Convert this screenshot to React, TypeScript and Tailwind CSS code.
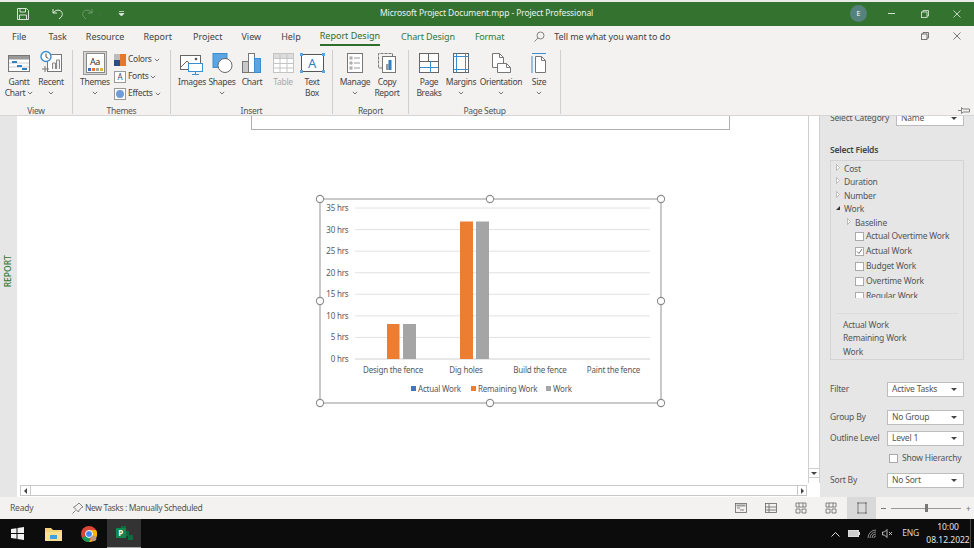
const font = { fontFamily: '"Noto Sans", "Open Sans", sans-serif' };

function Caret({ className = "" }: { className?: string }) {
  return (
    <svg width="6" height="4" viewBox="0 0 6 4" className={className}>
      <path d="M0.8 0.8 L3 3 L5.2 0.8" fill="none" stroke="#666" strokeWidth="0.9" />
    </svg>
  );
}

function SelectBox({ label, className = "" }: { label: string; className?: string }) {
  return (
    <div className={`flex items-center justify-between h-[15px] bg-white border border-[#bdbdbd] pl-1 pr-[6px] text-[#555] ${className}`}>
      <span>{label}</span>
      <span className="w-0 h-0 border-x-[3px] border-x-transparent border-t-[3px] border-t-[#444]" />
    </div>
  );
}

function RibbonButton({ w, icon, lines, caret, disabled }: { w: string; icon: React.ReactNode; lines: string[]; caret?: boolean; disabled?: boolean }) {
  return (
    <div className={`${w} flex flex-col items-center leading-[11px] ${disabled ? "text-[#a8a8a8]" : "text-[#444]"}`}>
      <div className="h-[26px] flex items-start justify-center">{icon}</div>
      {lines.map((l, i) => (
        <div key={i} className="whitespace-nowrap flex items-center gap-[2px] h-[11px]">
          {l}
          {caret && lines.length === 2 && i === 1 && <Caret />}
        </div>
      ))}
      {caret && lines.length === 1 && <Caret className="mt-[4px]" />}
    </div>
  );
}

function Group({ w, ml, label, children }: { w: string; ml: string; label: string; children: React.ReactNode }) {
  return (
    <div className={`${w} h-[64px] flex flex-col border-r border-[#cfcfcf]`}>
      <div className={`flex-1 flex ${ml}`}>{children}</div>
      <div className="text-center text-[#555] leading-[11px] -mb-[2px]">{label}</div>
    </div>
  );
}

const Ico = ({ children, w = 28, h = 28 }: { children: React.ReactNode; w?: number; h?: number }) => (
  <svg width={w} height={h} viewBox={`0 0 ${w} ${h}`} fill="none">{children}</svg>
);

const GanttIcon = (
  <Ico w={24}>
    <rect x="1.5" y="5.5" width="21" height="16" fill="#fff" stroke="#777" />
    <rect x="2" y="6" width="20" height="3.5" fill="#999" />
    <path d="M2 13h20M2 17h20" stroke="#ccc" />
    <rect x="5" y="11" width="5" height="2" fill="#2f7fc4" />
    <rect x="10" y="15" width="5" height="2" fill="#2f7fc4" />
    <rect x="15" y="18" width="5" height="2" fill="#2f7fc4" />
  </Ico>
);
const RecentIcon = (
  <Ico w={24}>
    <rect x="8.5" y="4.5" width="14" height="17" fill="#fff" stroke="#777" />
    <path d="M13.5 19v-6h3v6M17.5 19v-9h3v9" stroke="#888" fill="#eee" />
    <path d="M3 19h7M6 16v6" stroke="#777" />
    <circle cx="7" cy="6.5" r="5" fill="#fff" stroke="#3b8ed0" strokeWidth="1.4" />
    <path d="M7 3.5V7l2.4 1.4" stroke="#555" />
  </Ico>
);
const ThemesIcon = (
  <div className="w-[24px] h-[24px] mt-px bg-[#d6d6d6] border border-[#9a9a9a] flex items-center justify-center">
    <div className="w-[19px] h-[20px] bg-white border border-[#888] flex flex-col items-center text-[9px] leading-[13px] text-[#333] pt-[1px]">
      Aa
      <svg width="15" height="3" viewBox="0 0 15 3">
        <rect width="3" height="3" fill="#3f6fb5" /><rect x="4" width="3" height="3" fill="#e5762c" /><rect x="8" width="3" height="3" fill="#a5a5a5" /><rect x="12" width="3" height="3" fill="#e3b62a" />
      </svg>
    </div>
  </div>
);
const ImagesIcon = (
  <Ico w={26}>
    <rect x="1.5" y="5.5" width="20" height="14" fill="#fff" stroke="#666" />
    <path d="M2 17l6-6 5 5" stroke="#666" />
    <circle cx="17" cy="9" r="1.3" fill="#555" />
    <rect x="9.5" y="13.5" width="14" height="8" fill="#fff" stroke="#3b8ed0" />
    <path d="M16.500 22v2M13 24.500h7" stroke="#3b8ed0" />
  </Ico>
);
const ShapesIcon = (
  <Ico w={24}>
    <rect x="3" y="3.500" width="14" height="14" fill="#5da4e2" stroke="#3b8ed0" />
    <circle cx="15" cy="15.500" r="7" fill="#fff" stroke="#666" />
  </Ico>
);
const ChartIcon = (
  <Ico w={24}>
    <rect x="2.500" y="11.500" width="6" height="11" fill="#c8c8c8" stroke="#777" />
    <rect x="8.500" y="3.500" width="6" height="19" fill="#fff" stroke="#777" />
    <rect x="14.500" y="8.500" width="6" height="14" fill="#5da4e2" stroke="#3b8ed0" />
  </Ico>
);
const TableIcon = (
  <Ico w={24}>
    <rect x="2.500" y="3.500" width="20" height="19" fill="#fff" stroke="#c4c4c4" />
    <rect x="3" y="4" width="19" height="4" fill="#dcdcdc" />
    <path d="M2.500 8.500h20M2.500 13.500h20M2.500 18h20M9 4v18M16 4v18" stroke="#c4c4c4" />
  </Ico>
);
const TextBoxIcon = (
  <div className="relative w-[23px] h-[18px] mt-[4px] bg-white border border-[#555] flex items-center justify-center text-[13px] text-[#2f7fc4] leading-none">
    A
    <span className="absolute -left-[2px] -top-[2px] w-[3px] h-[3px] bg-[#5da4e2]" />
    <span className="absolute -right-[2px] -top-[2px] w-[3px] h-[3px] bg-[#5da4e2]" />
    <span className="absolute -left-[2px] -bottom-[2px] w-[3px] h-[3px] bg-[#5da4e2]" />
    <span className="absolute -right-[2px] -bottom-[2px] w-[3px] h-[3px] bg-[#5da4e2]" />
  </div>
);
const ManageIcon = (
  <Ico w={18}>
    <rect x="1.500" y="3.500" width="15" height="19" fill="#fff" stroke="#777" />
    <path d="M8 8h6M8 13h6M8 18h6" stroke="#999" />
    <rect x="4" y="7" width="2" height="2" stroke="#777" strokeWidth="0.7" />
    <rect x="4" y="12" width="2" height="2" stroke="#777" strokeWidth="0.7" />
    <rect x="4" y="17" width="2" height="2" stroke="#777" strokeWidth="0.7" />
  </Ico>
);
const CopyIcon = (
  <Ico w={22}>
    <path d="M6 18H2.500V3.500h14V7" stroke="#777" strokeDasharray="3 1" />
    <rect x="6.500" y="6.500" width="13" height="16" fill="#fff" stroke="#777" />
    <rect x="10" y="14" width="2.500" height="6" fill="#999" />
    <rect x="12.500" y="10" width="3" height="10" fill="#2f7fc4" />
  </Ico>
);
const BreaksIcon = (
  <Ico w={22}>
    <rect x="1.500" y="3.500" width="19" height="19" fill="#fff" stroke="#666" />
    <path d="M1.500 11.500h19M10.500 3.500v8" stroke="#666" />
    <path d="M1.500 17.500h19M12.500 11.500v11" stroke="#3b8ed0" />
  </Ico>
);
const MarginsIcon = (
  <Ico w={18}>
    <rect x="1.500" y="3.500" width="15" height="19" fill="#fff" stroke="#666" />
    <path d="M1.500 6.500h15M1.500 19.500h15M4.500 3.500v19M13.500 3.500v19" stroke="#3b8ed0" />
  </Ico>
);
const OrientationIcon = (
  <Ico w={22}>
    <path d="M2.500 3.500h7l4 4v10h-11z" fill="#fff" stroke="#777" />
    <path d="M9.500 3.500v4h4" stroke="#777" />
    <path d="M7.500 13.500h9l4 4v5h-13z" fill="#fff" stroke="#777" />
    <path d="M16.500 13.500v4h4" stroke="#777" />
  </Ico>
);
const SizeIcon = (
  <Ico w={18}>
    <path d="M2 3.500h14M2 6v17" stroke="#3b8ed0" />
    <path d="M5.500 6.500h6l4 4v12h-10z" fill="#fff" stroke="#777" />
    <path d="M11.500 6.500v4h4" stroke="#777" />
  </Ico>
);

function ThemeRow({ label, icon }: { label: string; icon: React.ReactNode }) {
  return (
    <div className="h-[17px] flex items-center gap-[2px] text-[#444]">
      {icon}
      <span>{label}</span>
      <Caret />
    </div>
  );
}

function Tree({ label, pl, open }: { label: string; pl: string; open?: boolean }) {
  return (
    <div className={`h-[13.5px] flex items-center ${pl} gap-[3px] text-[#555]`}>
      {open ? (
        <span className="w-0 h-0 border-l-[4px] border-l-transparent border-b-[4px] border-b-[#333] -mt-[2px] mr-[1px]" />
      ) : (
        <svg width="4" height="7" viewBox="0 0 4 7" className="-mt-[3px] mr-[1px]"><path d="M.5.5L3.500 3.500L.5 6.500z" fill="#fff" stroke="#999" strokeWidth="0.6" /></svg>
      )}
      <span>{label}</span>
    </div>
  );
}

function FieldCheck({ label, checked }: { label: string; checked?: boolean }) {
  return (
    <div className="h-[15px] flex items-center pl-[24px] gap-[2px] text-[#555]">
      <span className="w-[9px] h-[9px] bg-white border border-[#aaa] flex items-center justify-center">
        {checked && <svg width="7" height="7" viewBox="0 0 7 7"><path d="M1 3.500L3 5.500L6 1" fill="none" stroke="#555" strokeWidth="0.8" /></svg>}
      </span>
      <span>{label}</span>
    </div>
  );
}

function LabeledSelect({ label, value, mt }: { label: string; value: string; mt: string }) {
  return (
    <div className={`flex items-center justify-between ${mt}`}>
      <span className="text-[#555]">{label}</span>
      <SelectBox label={value} className="w-[77px]" />
    </div>
  );
}

function Chart() {
  const ys = [35, 30, 25, 20, 15, 10, 5, 0];
  const y0 = 160;
  const step = 21.57;
  const handles = [[6, 6], [176, 6], [347, 6], [6, 108], [347, 108], [6, 210], [176, 210], [347, 210]];
  return (
    <svg width="354" height="216" viewBox="0 0 354 216" fontFamily='"Noto Sans", sans-serif' fontSize="8" letterSpacing="-0.2" fill="#595959">
      <rect x="6" y="6" width="341" height="204" fill="#fff" stroke="#a6a6a6" strokeWidth="1.2" />
      {ys.map((v) => {
        const y = y0 + 6 - (v / 5) * step;
        return (
          <g key={v}>
            <line x1="41" x2="336" y1={y} y2={y} stroke={v === 0 ? "#d0d0d0" : "#e2e2e2"} />
            <text x="34.500" y={y + 3} textAnchor="end">{v} hrs</text>
          </g>
        );
      })}
      <rect x="73" y="131" width="12.500" height="35" fill="#ed7d31" />
      <rect x="89" y="131" width="13" height="35" fill="#a5a5a5" />
      <rect x="146" y="28.500" width="13" height="137.500" fill="#ed7d31" />
      <rect x="162" y="28.500" width="13" height="137.500" fill="#a5a5a5" />
      <text x="79" y="179.500" textAnchor="middle">Design the fence</text>
      <text x="152" y="179.500" textAnchor="middle">Dig holes</text>
      <text x="226" y="179.500" textAnchor="middle">Build the fence</text>
      <text x="299.500" y="179.500" textAnchor="middle">Paint the fence</text>
      <rect x="97" y="193" width="5" height="5" fill="#4472c4" />
      <text x="104" y="198.500">Actual Work</text>
      <rect x="157" y="193" width="5" height="5" fill="#ed7d31" />
      <text x="164" y="198.500">Remaining Work</text>
      <rect x="232" y="193" width="5" height="5" fill="#a5a5a5" />
      <text x="239" y="198.500">Work</text>
      {handles.map(([x, y], i) => (
        <circle key={i} cx={x} cy={y} r="3.600" fill="#fff" stroke="#8c8c8c" strokeWidth="1.100" />
      ))}
    </svg>
  );
}

const ViewIcon = ({ children }: { children: React.ReactNode }) => (
  <svg width="12" height="12" viewBox="0 0 12 12" fill="none" stroke="#666" strokeWidth="0.8">{children}</svg>
);

export default function App() {
  return (
    <div className="w-[974px] h-[548px] flex flex-col overflow-hidden bg-white text-[8.5px] leading-none" style={font}>
      {/* title bar */}
      <div className="h-[26px] border-t-2 border-[#e9ece8] bg-[#33722f] flex items-center text-white shrink-0 pb-px">
        <div className="w-[380px] flex items-center shrink-0 pl-[17px]">
          <svg width="12" height="12" viewBox="0 0 12 12" fill="none" stroke="#e8efe6" strokeWidth="0.9">
            <path d="M.5.5h9l2 2v9H.5z" /><path d="M3 .5v3.500h5.500V.5M2.500 11.500V7h7v4.500" />
          </svg>
          <svg width="12" height="12" viewBox="0 0 12 12" fill="none" stroke="#e8efe6" strokeWidth="1" className="ml-[23px]">
            <path d="M1 1v4h4M1.200 5C3 2.500 5.500 1.500 8 2.500c2.500 1.200 3 4.500 1.200 6.500L7 11" />
          </svg>
          <svg width="12" height="12" viewBox="0 0 12 12" fill="none" stroke="#6f9c6c" strokeWidth="1" className="ml-[17px]">
            <path d="M11 1v4H7M10.800 5C9 2.500 6.500 1.500 4 2.500 1.500 3.700 1 7 2.800 9L5 11" />
          </svg>
          <Caret className="ml-[4px] opacity-50" />
          <svg width="7" height="6" viewBox="0 0 7 6" className="ml-[15px]"><path d="M1 .5h5M1 2.500h5L3.500 5z" stroke="#e8efe6" strokeWidth="0.7" fill="#e8efe6" /></svg>
        </div>
        <div className="w-[213px] text-center whitespace-nowrap text-[#eef3ed] tracking-[-0.1px]">Microsoft Project Document.mpp  -  Project Professional</div>
        <div className="flex-1 flex items-center justify-end pr-[13px]">
          <div className="w-[17px] h-[17px] rounded-full bg-[#55827c] flex items-center justify-center text-[7px]">E</div>
          <span className="w-[7px] h-px bg-[#cfe0cd] ml-[21px]" />
          <svg width="8" height="8" viewBox="0 0 8 8" fill="none" stroke="#e8efe6" strokeWidth="0.8" className="ml-[26px]"><rect x=".5" y="2" width="5.500" height="5.500" /><path d="M2 2V.5h5.500V6H6" /></svg>
          <svg width="8" height="8" viewBox="0 0 8 8" stroke="#e8efe6" strokeWidth="0.8" className="ml-[24px]"><path d="M.5.5l7 7M7.500.5l-7 7" /></svg>
        </div>
      </div>

      {/* tabs */}
      <div className="h-[20px] bg-[#f3f2f1] flex items-center text-[9px] text-[#444] shrink-0 relative">
        <div className="flex items-center pl-[12px]">
          <span>File</span>
          <span className="ml-[22px]">Task</span>
          <span className="ml-[19px] tracking-[-0.05px]">Resource</span>
          <span className="ml-[19px]">Report</span>
          <span className="ml-[21px]">Project</span>
          <span className="ml-[19px]">View</span>
          <span className="ml-[20px]">Help</span>
          <span className="ml-[19px] h-[20px] flex items-center text-[#2f6f2c] border-b-2 border-[#2f6f2c]">Report Design</span>
          <span className="ml-[21px] tracking-[-0.1px] text-[#2f7a3a]">Chart Design</span>
          <span className="ml-[20px] tracking-[-0.2px] text-[#2f7a3a]">Format</span>
        </div>
        <svg width="11" height="11" viewBox="0 0 11 11" fill="none" stroke="#666" strokeWidth="0.8" className="ml-[30px]"><circle cx="6.500" cy="4.500" r="3.500" /><path d="M4 7l-3.500 3.500" /></svg>
        <span className="ml-[9px] tracking-[-0.1px]">Tell me what you want to do</span>
        <div className="flex-1 flex items-center justify-end pr-[13px]">
          <svg width="8" height="8" viewBox="0 0 8 8" fill="none" stroke="#555" strokeWidth="0.8"><rect x=".5" y="2" width="5.500" height="5.500" /><path d="M2 2V.5h5.500V6H6" /></svg>
          <svg width="8" height="8" viewBox="0 0 8 8" stroke="#555" strokeWidth="0.8" className="ml-[24px]"><path d="M.5.5l7 7M7.500.5l-7 7" /></svg>
        </div>
      </div>

      {/* ribbon */}
      <div className="h-[70px] bg-[#f3f2f1] border-b border-[#d6d6d6] flex items-start pt-[4px] shrink-0 relative tracking-[-0.3px]">
        <Group w="w-[73px]" ml="pl-[4px]" label="View">
          <RibbonButton w="w-[30px]" icon={GanttIcon} lines={["Gantt", "Chart"]} caret />
          <RibbonButton w="w-[34px]" icon={RecentIcon} lines={["Recent"]} caret />
        </Group>
        <Group w="w-[98px]" ml="pl-[5px]" label="Themes">
          <RibbonButton w="w-[34px]" icon={ThemesIcon} lines={["Themes"]} caret />
          <div className="flex flex-col pl-[2px] pt-px">
            <ThemeRow label="Colors" icon={<svg width="12" height="12" viewBox="0 0 12 12"><rect width="6" height="6" fill="#bbb" /><rect x="6" width="6" height="6" fill="#e5762c" /><rect y="6" width="6" height="6" fill="#2a4f86" /><rect x="6" y="6" width="6" height="6" fill="#e5762c" /></svg>} />
            <ThemeRow label="Fonts" icon={<span className="w-[12px] h-[12px] border border-[#999] bg-white text-[8px] leading-[10px] text-center text-[#2a4f86]">A</span>} />
            <ThemeRow label="Effects" icon={<span className="w-[12px] h-[12px] border border-[#999] bg-white flex items-center justify-center"><span className="w-[8px] h-[8px] rounded-full bg-[#6f9bd6]" /></span>} />
          </div>
        </Group>
        <Group w="w-[162px]" ml="pl-[5px]" label="Insert">
          <RibbonButton w="w-[32px]" icon={ImagesIcon} lines={["Images"]} />
          <RibbonButton w="w-[28px]" icon={ShapesIcon} lines={["Shapes"]} caret />
          <RibbonButton w="w-[32px]" icon={ChartIcon} lines={["Chart"]} />
          <RibbonButton w="w-[30px]" icon={TableIcon} lines={["Table"]} disabled />
          <RibbonButton w="w-[28px]" icon={TextBoxIcon} lines={["Text", "Box"]} />
        </Group>
        <Group w="w-[76px]" ml="pl-[4px]" label="Report">
          <RibbonButton w="w-[36px]" icon={ManageIcon} lines={["Manage"]} caret />
          <RibbonButton w="w-[28px]" icon={CopyIcon} lines={["Copy", "Report"]} />
        </Group>
        <Group w="w-[152px]" ml="pl-[4px]" label="Page Setup">
          <RibbonButton w="w-[32px]" icon={BreaksIcon} lines={["Page", "Breaks"]} />
          <RibbonButton w="w-[32px]" icon={MarginsIcon} lines={["Margins"]} caret />
          <RibbonButton w="w-[48px]" icon={OrientationIcon} lines={["Orientation"]} caret />
          <RibbonButton w="w-[28px]" icon={SizeIcon} lines={["Size"]} caret />
        </Group>
        <svg width="13" height="7" viewBox="0 0 13 7" fill="none" stroke="#555" strokeWidth="0.7" className="absolute right-[3px] bottom-[1px]"><path d="M0 3.500h3M3.500.5v6L5 5h6.500V2H5z" /></svg>
      </div>

      {/* body */}
      <div className="flex-1 flex min-h-0">
        <div className="w-[17px] bg-[#e6e6e6] flex items-center justify-center shrink-0 pb-[70px]">
          <span className="-rotate-90 text-[#2f7a3a] text-[8.5px] font-medium">REPORT</span>
        </div>
        <div className="flex-1 flex flex-col min-w-0">
          <div className="flex-1 flex min-h-0">
            <div className="w-[791px] bg-white flex flex-col items-start overflow-hidden">
              <div className="ml-[234px] w-[479px] h-[14px] border-x border-b border-[#b0b0b0] shrink-0" />
              <div className="ml-[297px] mt-[63px]"><Chart /></div>
            </div>
            <div className="w-[12px] bg-white border-x border-[#cfcfcf] flex flex-col justify-end items-center shrink-0">
              <div className="w-full h-[10px] border-y border-[#cfcfcf] flex items-center justify-center">
                <span className="w-0 h-0 border-x-[3px] border-x-transparent border-t-[3px] border-t-[#444]" />
              </div>
              <div className="h-[5px]" />
            </div>
          </div>
          <div className="h-[14px] flex items-start bg-white shrink-0">
            <div className="ml-[3px] w-[787px] h-[11px] mt-[2px] border border-[#c8c8c8] flex justify-between items-center bg-white">
              <div className="w-[10px] h-full border-r border-[#c8c8c8] flex items-center justify-center"><span className="w-0 h-0 border-y-[3px] border-y-transparent border-r-[3px] border-r-[#444]" /></div>
              <div className="w-[9px] h-full border-l border-[#c8c8c8] flex items-center justify-center"><span className="w-0 h-0 border-y-[3px] border-y-transparent border-l-[3px] border-l-[#444]" /></div>
            </div>
          </div>
        </div>
        {/* field list panel */}
        <div className="w-[154px] bg-[#e6e6e6] shrink-0 pl-[10px] pr-[10px] overflow-hidden tracking-[-0.2px]">
          <div className="flex items-center justify-between -mt-[5px]">
            <span className="text-[#555]">Select Category</span>
            <SelectBox label="Name" className="w-[68px]" />
          </div>
          <div className="font-semibold text-[#444] mt-[19px] leading-[10px]">Select Fields</div>
          <div className="mt-[5px] h-[200px] border border-[#d4d4d4] pt-[1px] flex flex-col">
            <div className="h-[136px] overflow-hidden">
              <Tree label="Cost" pl="pl-[5px]" />
              <Tree label="Duration" pl="pl-[5px]" />
              <Tree label="Number" pl="pl-[5px]" />
              <Tree label="Work" pl="pl-[5px]" open />
              <Tree label="Baseline" pl="pl-[16px]" />
              <div className="-mt-px" />
              <FieldCheck label="Actual Overtime Work" />
              <FieldCheck label="Actual Work" checked />
              <FieldCheck label="Budget Work" />
              <FieldCheck label="Overtime Work" />
              <FieldCheck label="Regular Work" />
            </div>
            <div className="mx-[5px] mt-[15px] border-t border-[#dcdcdc] pt-[4px] pl-[7px] text-[#555]">
              <div className="h-[13.5px] flex items-center">Actual Work</div>
              <div className="h-[13.5px] flex items-center">Remaining Work</div>
              <div className="h-[13.5px] flex items-center">Work</div>
            </div>
          </div>
          <LabeledSelect label="Filter" value="Active Tasks" mt="mt-[22px]" />
          <LabeledSelect label="Group By" value="No Group" mt="mt-[13px]" />
          <LabeledSelect label="Outline Level" value="Level 1" mt="mt-[6px]" />
          <div className="flex items-center pl-[59px] gap-[4px] mt-[6px] h-[12px] text-[#555]">
            <span className="w-[9px] h-[9px] bg-white border border-[#aaa]" />
            <span className="whitespace-nowrap">Show Hierarchy</span>
          </div>
          <LabeledSelect label="Sort By" value="No Sort" mt="mt-[9px]" />
        </div>
      </div>

      {/* status bar */}
      <div className="h-[22px] bg-[#f3f2f1] flex items-center text-[#555] shrink-0">
        <span className="pl-[10px] w-[72px] tracking-[-0.2px]">Ready</span>
        <svg width="12" height="12" viewBox="0 0 12 12" fill="none" stroke="#666" strokeWidth="0.8"><path d="M7 1l4 4-1.500.5-2.500 3-.5 1.500-5-5 1.500-.5 3-2.500zM3.500 8.500L.5 11.500" /></svg>
        <span className="ml-px tracking-[-0.37px]">New Tasks : Manually Scheduled</span>
        <div className="flex-1 flex items-center justify-end h-full">
          <ViewIcon><rect x=".5" y="1.500" width="11" height="9" /><rect x="1.500" y="2.500" width="9" height="2" fill="#999" stroke="none" /><path d="M2 6h3M5 8h4" /></ViewIcon>
          <div className="ml-[18px]"><ViewIcon><rect x=".5" y="1.500" width="11" height="9" /><path d="M.5 5h11M.5 8h11M4 1.500v9" /></ViewIcon></div>
          <div className="ml-[18px]"><ViewIcon><path d="M1 1h10v4H1zM1 7h4v4H1zM7 7h4v4H7zM4 1v4M8 1v4" /></ViewIcon></div>
          <div className="ml-[18px]"><ViewIcon><path d="M1 1h10v4H1zM1 7h4v4H1zM7 7h4v4H7zM4 1v4M8 1v4" /></ViewIcon></div>
          <div className="ml-[10px] w-[29px] h-full bg-[#d9d9d9] flex items-center justify-center">
            <svg width="10" height="12" viewBox="0 0 10 12" fill="none" stroke="#666" strokeWidth="0.8"><rect x="1" y="1" width="8" height="10" /><path d="M0 1h2M8 1h2M0 11h2M8 11h2" /></svg>
          </div>
          <div className="flex items-center w-[98px] pl-[5px] pr-[3px] text-[#777] gap-[5px]">
            <span className="w-[5px] h-px bg-[#777]" />
            <div className="flex-1 h-px bg-[#999] flex items-center justify-center pl-[2px]">
              <span className="w-[3px] h-[8px] bg-[#777]" />
            </div>
            <span className="text-[9px] leading-none">+</span>
          </div>
        </div>
      </div>

      {/* taskbar */}
      <div className="h-[29px] bg-[#0c0c0c] flex items-center shrink-0 text-[#d8d8d8]">
        <div className="pl-[11px] w-[41px]">
          <svg width="13" height="13" viewBox="0 0 13 13" fill="#f2f2f2"><path d="M0 2l5.500-.8V6H0zM6.500 1L13 0v6H6.500zM0 7h5.500v4.800L0 11zM6.500 7H13v6l-6.500-1z" /></svg>
        </div>
        <svg width="17" height="14" viewBox="0 0 17 14" className="ml-[4px]"><path d="M0 1h6l2 2h9v11H0z" fill="#f3d377" /><rect x="0" y="5" width="17" height="9" fill="#f8e08e" /><rect x="5" y="8" width="7" height="4" fill="#3aa5dc" /></svg>
        <svg width="16" height="16" viewBox="0 0 16 16" className="ml-[19px]">
          <circle cx="8" cy="8" r="8" fill="#db4437" />
          <path d="M8 8L1 12a8 8 0 0 0 7 4z" fill="#0f9d58" />
          <path d="M8 4h7a8 8 0 0 1-7 12l3.500-6z" fill="#f4b400" />
          <circle cx="8" cy="8" r="3.500" fill="#4285f4" stroke="#fff" />
          <circle cx="12.500" cy="12.500" r="2.800" fill="#b59a7c" />
        </svg>
        <div className="ml-[10px] w-[34px] h-full bg-[#333] border-b border-[#aaa] flex items-center justify-center">
          <svg width="18" height="16" viewBox="0 0 18 16">
            <path d="M6 1h5v5h-5zM10 6h4v5h-4zM13 10h5v5h-5z" fill="#0f6b3f" />
            <rect x="1" y="3" width="10" height="10" fill="#15854e" />
            <text x="3.200" y="11" fontSize="8" fontWeight="700" fill="#fff" fontFamily='"Noto Sans", sans-serif'>P</text>
          </svg>
        </div>
        <div className="flex-1 flex items-center justify-end h-full">
          <svg width="9" height="6" viewBox="0 0 9 6" fill="none" stroke="#ddd"><path d="M.5 5.500l4-4 4 4" /></svg>
          <svg width="12" height="7" viewBox="0 0 12 7" className="ml-[8px]"><rect x=".5" y=".5" width="10" height="6" fill="#ccc" stroke="#ddd" /><rect x="11" y="2" width="1" height="3" fill="#ddd" /></svg>
          <svg width="10" height="10" viewBox="0 0 10 10" fill="none" stroke="#aaa" strokeWidth="0.8" className="ml-[7px]"><path d="M1 9a8 8 0 0 1 8-8M3 9a6 6 0 0 1 6-6M5 9a4 4 0 0 1 4-4M7 9a2 2 0 0 1 2-2" /></svg>
          <svg width="11" height="9" viewBox="0 0 11 9" fill="none" stroke="#ddd" strokeWidth="0.8" className="ml-[5px]"><path d="M.5 3h2L5 .5v8L2.500 6h-2zM7 3l3 3M10 3L7 6" /></svg>
          <span className="ml-[9px] text-[8.5px] tracking-[-0.2px]">ENG</span>
          <div className="ml-[7px] w-[44px] flex flex-col items-center gap-[5px] text-[8.5px] text-[#e4e4e4]">
            <span>10:00</span>
            <span>08.12.2022</span>
          </div>
          <div className="w-px h-full bg-[#444] mr-[3px]" />
        </div>
      </div>
    </div>
  );
}
